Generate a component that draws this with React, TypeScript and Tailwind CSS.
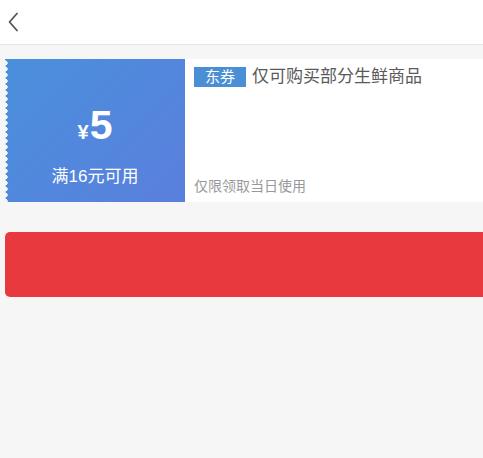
import React from "react";

export default function App() {
  return (
    <div
      className="w-[483px] h-[458px] bg-[#f6f6f6] overflow-hidden"
      style={{ fontFamily: '"Liberation Sans", "Noto Sans CJK SC", sans-serif' }}
    >
      <div className="h-[45px] bg-white border-b border-[#e4e4e4] flex items-center pl-[7px]">
        <svg width="12" height="20" viewBox="0 0 12 20" fill="none">
          <path d="M10 1.5 L2.5 10 L10 18.5" stroke="#555" strokeWidth="1.8" strokeLinecap="round" strokeLinejoin="round" />
        </svg>
      </div>

      <div className="mt-[14px] ml-[5px] flex h-[143px] w-[540px]">
        <div className="relative w-[180px] bg-[linear-gradient(135deg,#4a90dc_0%,#5a7fdd_100%)] flex flex-col items-center text-white">
          <div className="absolute left-[-3px] top-[1px] h-full w-[6px] bg-[radial-gradient(circle,#f6f6f6_2.4px,transparent_2.9px)] bg-[length:6px_6px]" />
          <div className="mt-[46px] flex items-baseline h-[46px]">
            <span className="text-[20px] font-bold leading-none mr-[1px]">¥</span>
            <span className="text-[41px] font-bold leading-none">5</span>
          </div>
          <div className="mt-[17px] text-[17px] leading-none">满16元可用</div>
        </div>
        <div className="flex-1 bg-white flex flex-col justify-between pl-[9px] pt-[8px] pb-[9px]">
          <div className="flex items-center">
            <span className="w-[52px] h-[20px] bg-[#4a8fd6] text-white text-[15px] leading-[20px] text-center">东券</span>
            <span className="ml-[6px] text-[17px] leading-[20px] text-[#5a5a5a]">仅可购买部分生鲜商品</span>
          </div>
          <div className="text-[14px] leading-none text-[#999]">仅限领取当日使用</div>
        </div>
      </div>

      <div className="mt-[30px] ml-[5px] w-[540px] h-[65px] bg-[#e8393e] rounded-[5px]" />
    </div>
  );
}
